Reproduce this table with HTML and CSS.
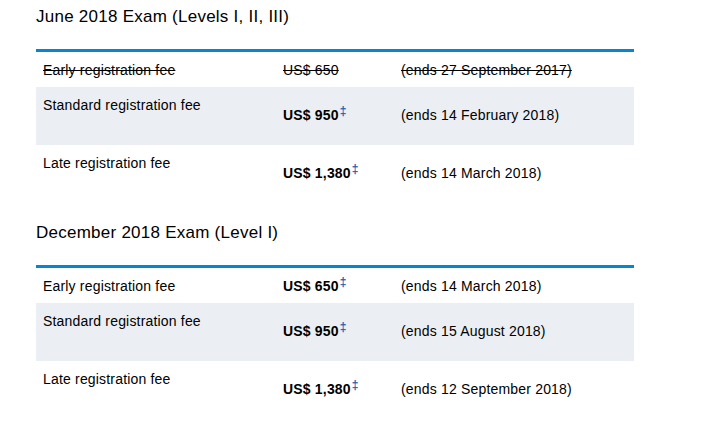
FILE: index.html
```html
<!DOCTYPE html>
<html>
<head>
<meta charset="utf-8">
<link rel="stylesheet" href="styles.css">
</head>
<body>
<div class="page">
  <section class="exam">
    <h2 class="exam-title">June 2018 Exam (Levels I, II, III)</h2>
    <div class="fees">
      <div class="row row-short expired">
        <div class="cell label">Early registration fee</div>
        <div class="cell price">US$ 650</div>
        <div class="cell date">(ends 27 September 2017)</div>
      </div>
      <div class="row row-tall alt">
        <div class="cell label">Standard registration fee</div>
        <div class="cell price low"><b>US$ 950</b><sup>‡</sup></div>
        <div class="cell date low">(ends 14 February 2018)</div>
      </div>
      <div class="row row-tall">
        <div class="cell label">Late registration fee</div>
        <div class="cell price low"><b>US$ 1,380</b><sup>‡</sup></div>
        <div class="cell date low">(ends 14 March 2018)</div>
      </div>
    </div>
  </section>
  <section class="exam">
    <h2 class="exam-title">December 2018 Exam (Level I)</h2>
    <div class="fees">
      <div class="row row-short">
        <div class="cell label">Early registration fee</div>
        <div class="cell price"><b>US$ 650</b><sup>‡</sup></div>
        <div class="cell date">(ends 14 March 2018)</div>
      </div>
      <div class="row row-tall alt">
        <div class="cell label">Standard registration fee</div>
        <div class="cell price low"><b>US$ 950</b><sup>‡</sup></div>
        <div class="cell date low">(ends 15 August 2018)</div>
      </div>
      <div class="row row-tall">
        <div class="cell label">Late registration fee</div>
        <div class="cell price low"><b>US$ 1,380</b><sup>‡</sup></div>
        <div class="cell date low">(ends 12 September 2018)</div>
      </div>
    </div>
  </section>
</div>
</body>
</html>
```
FILE: styles.css
```css
html, body {
  margin: 0;
  padding: 0;
  background: #fff;
}
body {
  font-family: "Liberation Sans", Arial, sans-serif;
  color: #000;
  font-size: 14px;
  line-height: 16px;
  letter-spacing: 0.18px;
}
.page {
  padding: 7px 0 0 36px;
  width: 598px;
}
.exam + .exam {
  margin-top: 20px;
}
.exam-title {
  margin: 0 0 22px 0;
  font-size: 17px;
  line-height: 20px;
  font-weight: normal;
  letter-spacing: 0.25px;
}
.fees {
  border-top: 3px solid #0587cf;
}
.row {
  display: grid;
  grid-template-columns: 240px 118px 240px;
}
.row-short { height: 35px; }
.row-tall { height: 58px; }
.alt { background: #ebeff3; }
.cell {
  padding: 10px 7px 0 7px;
}
.cell.low {
  padding-top: 20px;
}
.expired .cell {
  text-decoration: line-through;
}
.price b {
  font-weight: bold;
}
.price sup {
  font-size: 12px;
  font-weight: bold;
  line-height: 0;
  vertical-align: 5px;
  color: #1f64b4;
  margin-left: 1px;
}
```
